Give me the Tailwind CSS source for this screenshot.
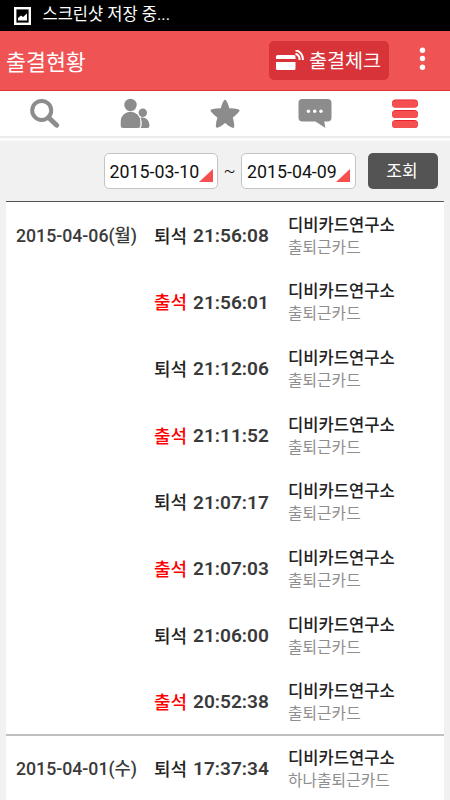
<!DOCTYPE html>
<html lang="ko">
<head>
    <meta charset="UTF-8">
    <meta name="viewport" content="width=device-width, initial-scale=1.0">
    <title>출결현황</title>
    <script src="https://cdn.jsdelivr.net/npm/@tailwindcss/browser@4"></script>
</head>
<body class="w-[450px] h-[800px] overflow-hidden bg-[#f1f1f1] font-['Roboto','Noto_Sans_CJK_KR',sans-serif] whitespace-nowrap">
    <!-- Status bar -->
    <div class="flex items-center h-[31px] bg-black text-white pl-[14px] pb-[2px]">
        <svg class="w-[17px] h-[18px] mt-[2px]" viewBox="0 0 17 18">
            <rect x="1.2" y="1.2" width="14.6" height="15.6" fill="none" stroke="#fff" stroke-width="2.4"/>
            <path d="M4 13.500V11l3-2.500 2 1.500 4-3.500v7z" fill="#fff"/>
        </svg>
        <span class="ml-[11.500px] text-[16.5px] leading-[20px]">스크린샷 저장 중...</span>
    </div>

    <!-- Title bar -->
    <header class="flex items-center h-[60px] bg-[#f05353] border-b border-[#e23338] pl-[6px]">
        <h1 class="pt-[4px] text-[21.7px] leading-[30px] text-white">출결현황</h1>
        <button class="ml-auto flex items-center w-[120px] h-[39px] rounded-[5px] bg-[#d83338] pl-[7px] text-white">
            <svg class="w-[28px] h-[22px]" viewBox="0 0 28 22">
                <path d="M0 6.500a1.500 1.500 0 0 1 1.500-1.500H18a1.500 1.500 0 0 1 1.500 1.500V9H0zM0 12h19.500v6.500a1.500 1.500 0 0 1-1.500 1.500H1.500a1.500 1.500 0 0 1-1.500-1.500z" fill="#fff"/>
                <path d="M19.500 3.800a6 6 0 0 1 4 6.200M19.500 .2a9 9 0 0 1 7.300 9.800" fill="none" stroke="#fff" stroke-width="2"/>
            </svg>
            <span class="ml-[5px] pt-[3px] text-[19.6px] leading-[28px]">출결체크</span>
        </button>
        <svg class="ml-[30px] mr-[24px] w-[7px] h-[24px] mb-[3px]" viewBox="0 0 7 24" fill="#fff">
            <circle cx="3.500" cy="3.200" r="2.700"/>
            <circle cx="3.500" cy="11.500" r="2.700"/>
            <circle cx="3.500" cy="20.300" r="2.700"/>
        </svg>
    </header>

    <!-- Tabs -->
    <nav class="grid grid-cols-5 h-[47px] bg-white border-b-2 border-[#ececec] pt-[7px] justify-items-center">
        <svg class="w-[32px] h-[32px]" viewBox="0 0 32 32" fill="none" stroke="#8c8c8c">
            <circle cx="12.700" cy="12.400" r="9.500" stroke-width="4"/>
            <path d="M19.500 19.500L27.700 27.200" stroke-width="5" stroke-linecap="round"/>
        </svg>
        <svg class="w-[32px] h-[32px]" viewBox="0 0 32 32" fill="#8c8c8c">
            <circle cx="11.500" cy="7" r="6.200"/>
            <circle cx="23.800" cy="14.700" r="4.200"/>
            <path d="M1.700 27.500V23.500a9.800 9.800 0 0 1 19.600 0V27.500q0 2.500-2.500 2.500H4.200q-2.500 0-2.500-2.500z"/>
            <path d="M21.300 19.800c5.500-1.500 9.200 2.700 9.200 8q0 2.200-2.200 2.200h-6.800q1.300-1.300 1.200-3.500V24q-.2-2.500-1.400-4.200z"/>
        </svg>
        <svg class="w-[32px] h-[32px]" viewBox="0 0 32 32" fill="#8c8c8c">
            <path d="M14.900 2.600q1.200-1.600 2.300 0 2 3 3.100 7.600 4.300-.2 8.900 1.100 2.200.8.700 2.500-2.500 3.300-6.100 5.700 1.200 4 1.500 8.500 0 2.600-2.400 1.600-3.700-1.800-6.800-4.700-3.200 2.900-7 4.700-2.300.8-2.300-1.600.3-4.500 1.600-8.500-3.700-2.400-6.300-5.700-1.400-1.700.8-2.500 4.600-1.300 8.900-1.100 1-4.600 3.100-7.600z"/>
        </svg>
        <svg class="w-[34px] h-[32px]" viewBox="0 0 34 32">
            <path d="M4.500 1h25a4 4 0 0 1 4 4v14.500a4 4 0 0 1-4 4H26.200l1.200 6.500L17.500 23.500H4.500a4 4 0 0 1-4-4V5a4 4 0 0 1 4-4z" fill="#8c8c8c"/>
            <g fill="#fff">
                <circle cx="10.400" cy="13.300" r="1.700"/>
                <circle cx="16.700" cy="13.300" r="1.700"/>
                <circle cx="23" cy="13.300" r="1.700"/>
            </g>
        </svg>
        <svg class="w-[26px] h-[32px]" viewBox="0 0 26 32">
            <g fill="#e8141c">
                <rect y="1.500" width="26" height="8" rx="4"/>
                <rect y="12" width="26" height="8" rx="4"/>
                <rect y="22" width="26" height="8" rx="4"/>
            </g>
            <g fill="#f4504f">
                <rect y="2.200" width="26" height="7.300" rx="3.600"/>
                <rect y="12.700" width="26" height="7.300" rx="3.600"/>
                <rect y="22.700" width="26" height="7.300" rx="3.600"/>
            </g>
        </svg>
    </nav>
    <div class="h-[3px] bg-[#fcfcfc]"></div>

    <!-- Period filter -->
    <div class="flex h-[60px] pt-[12px] pl-[104px] text-[17.8px] text-[#111]">
        <div class="relative w-[114px] h-[36px] rounded-[5px] border border-[#c4c4c4] bg-white pl-[4.5px] leading-[35px]">
            2015-03-10
            <svg class="absolute right-[4px] bottom-[6px] w-[14px] h-[13px]" viewBox="0 0 14 13"><path d="M14 0v13H0z" fill="#f4504f"/></svg>
        </div>
        <span class="w-[23px] text-center leading-[35px] font-light">~</span>
        <div class="relative w-[115px] h-[36px] rounded-[5px] border border-[#c4c4c4] bg-white pl-[5px] leading-[35px]">
            2015-04-09
            <svg class="absolute right-[5px] bottom-[6px] w-[14px] h-[13px]" viewBox="0 0 14 13"><path d="M14 0v13H0z" fill="#f4504f"/></svg>
        </div>
        <button class="ml-[12px] w-[70px] h-[36px] rounded-[5px] bg-[#545454] pr-[2px] text-white text-[17px] leading-[36px]">조회</button>
    </div>

    <!-- Attendance list -->
    <main id="attendance" class="mx-[6px] h-[599px] border-t border-[#555] bg-white overflow-hidden"></main>

    <script>
        const days = [
            { date: '2015-04-06(월)', logs: [
                ['퇴석', '21:56:08', '출퇴근카드'],
                ['출석', '21:56:01', '출퇴근카드'],
                ['퇴석', '21:12:06', '출퇴근카드'],
                ['출석', '21:11:52', '출퇴근카드'],
                ['퇴석', '21:07:17', '출퇴근카드'],
                ['출석', '21:07:03', '출퇴근카드'],
                ['퇴석', '21:06:00', '출퇴근카드'],
                ['출석', '20:52:38', '출퇴근카드'],
            ] },
            { date: '2015-04-01(수)', logs: [
                ['퇴석', '17:37:34', '하나출퇴근카드'],
            ] },
        ];

        document.getElementById('attendance').innerHTML = days.map((day, i) => `
            <section class="${i ? '-mt-px border-t-2 border-[#c0c0c0]' : ''}">
                ${day.logs.map(([type, time, card], j) => `
                    <div class="grid grid-cols-[138px_39px_95px_1fr] items-center h-[66.65px] pl-[10px] text-[#3a3a3a] ${i ? '' : 'pt-[2px]'}">
                        <span class="text-[17.7px] font-medium">${j ? '' : day.date}</span>
                        <span class="text-[18px] font-medium ${type === '출석' ? 'text-[#ff0000]' : 'text-[#222]'}">${type}</span>
                        <span class="text-[19.1px] font-semibold">${time}</span>
                        <div>
                            <p class="text-[16.6px] leading-[23px] font-medium text-[#222]">디비카드연구소</p>
                            <p class="text-[15.8px] leading-[22px] text-[#8e8e8e]">${card}</p>
                        </div>
                    </div>`).join('')}
            </section>`).join('');
    </script>
</body>
</html>
